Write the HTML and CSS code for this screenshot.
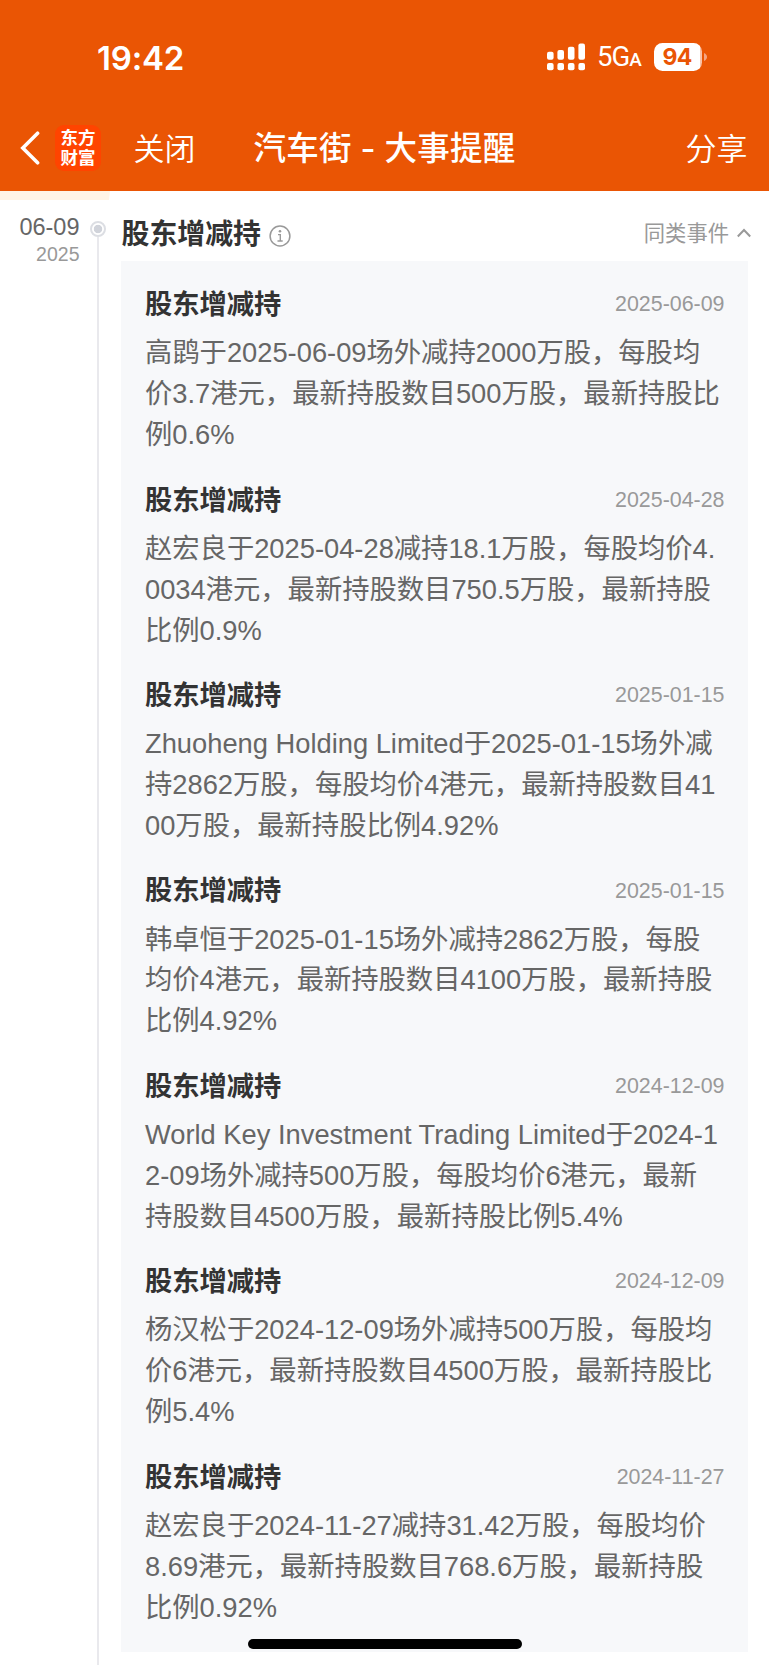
FILE: index.html
```html
<!DOCTYPE html>
<html lang="zh-CN">
<head>
<meta charset="utf-8">
<title>汽车街 - 大事提醒</title>
<link rel="stylesheet" href="styles.css">
</head>
<body>
<header class="header">
  <div class="status">
    <span class="time">19:42</span>
    <div class="indicators">
      <svg class="signal" width="38" height="28" viewBox="0 0 38 28" fill="#fff">
        <rect x="0" y="8.8" width="6.6" height="8" rx="2"/><rect x="10.4" y="7" width="6.6" height="9.8" rx="2"/><rect x="20.9" y="3.8" width="6.6" height="13" rx="2"/><rect x="31.4" y="0.5" width="6.6" height="16.3" rx="2"/>
        <rect x="0" y="20" width="6.6" height="7.2" rx="2"/><rect x="10.4" y="20" width="6.6" height="7.2" rx="2"/><rect x="20.9" y="20" width="6.6" height="7.2" rx="2"/><rect x="31.4" y="20" width="6.6" height="7.2" rx="2"/>
      </svg>
      <span class="network">5G<span class="network-sub">A</span></span>
      <div class="battery"><span class="level">94</span></div>
      <svg class="battery-tip" width="3" height="8" viewBox="0 0 3 8"><path d="M0 0C4 1.5 4 6.500 0 8Z" fill="#f5a583"/></svg>
    </div>
  </div>
  <nav class="nav">
    <svg class="back" width="20" height="34" viewBox="0 0 20 34" fill="none" stroke="#fff" stroke-width="3.6" stroke-linecap="round" stroke-linejoin="miter"><path d="M17.600 2.200L2.800 17L17.600 31.800"/></svg>
    <div class="logo">东方<br>财富</div>
    <span class="close">关闭</span>
    <h1 class="page-title">汽车街 - 大事提醒</h1>
    <span class="share">分享</span>
  </nav>
</header>
<main class="timeline">
  <aside class="rail">
    <svg class="tag" width="110" height="9" viewBox="0 0 110 9"><path d="M0 0H110L109 9H0Z" fill="#fff4e6"/></svg>
    <div class="rail-row">
      <div class="day"><div class="month-day">06-09</div><div class="year">2025</div></div>
      <div class="axis"><div class="dot"></div><div class="line"></div></div>
    </div>
  </aside>
  <section class="event">
    <div class="event-head">
      <h2 class="event-title">股东增减持</h2>
      <svg class="info" width="22" height="22" viewBox="0 0 22 22" fill="none" stroke="#999"><circle cx="11" cy="11" r="9.900" stroke-width="1.500"/><path d="M9 9.600H11.300V16M8.500 16H13.700" stroke-width="1.400"/><circle cx="11" cy="6.300" r="1.300" fill="#999" stroke="none"/></svg>
      <span class="similar">同类事件</span>
      <svg class="chevron" width="14" height="10" viewBox="0 0 14 10" fill="none" stroke="#999" stroke-width="2"><path d="M0.800 8.500L7 2L13.200 8.500"/></svg>
    </div>
    <div class="panel">
      <article class="item">
        <div class="item-head"><h3>股东增减持</h3><time>2025-06-09</time></div>
        <p>高鹍于2025-06-09场外减持2000万股，每股均<br>价3.7港元，最新持股数目500万股，最新持股比<br>例0.6%</p>
      </article>
      <article class="item">
        <div class="item-head"><h3>股东增减持</h3><time>2025-04-28</time></div>
        <p>赵宏良于2025-04-28减持18.1万股，每股均价4.<br>0034港元，最新持股数目750.5万股，最新持股<br>比例0.9%</p>
      </article>
      <article class="item">
        <div class="item-head"><h3>股东增减持</h3><time>2025-01-15</time></div>
        <p>Zhuoheng Holding Limited于2025-01-15场外减<br>持2862万股，每股均价4港元，最新持股数目41<br>00万股，最新持股比例4.92%</p>
      </article>
      <article class="item">
        <div class="item-head"><h3>股东增减持</h3><time>2025-01-15</time></div>
        <p>韩卓恒于2025-01-15场外减持2862万股，每股<br>均价4港元，最新持股数目4100万股，最新持股<br>比例4.92%</p>
      </article>
      <article class="item">
        <div class="item-head"><h3>股东增减持</h3><time>2024-12-09</time></div>
        <p>World Key Investment Trading Limited于2024-1<br>2-09场外减持500万股，每股均价6港元，最新<br>持股数目4500万股，最新持股比例5.4%</p>
      </article>
      <article class="item">
        <div class="item-head"><h3>股东增减持</h3><time>2024-12-09</time></div>
        <p>杨汉松于2024-12-09场外减持500万股，每股均<br>价6港元，最新持股数目4500万股，最新持股比<br>例5.4%</p>
      </article>
      <article class="item">
        <div class="item-head"><h3>股东增减持</h3><time>2024-11-27</time></div>
        <p>赵宏良于2024-11-27减持31.42万股，每股均价<br>8.69港元，最新持股数目768.6万股，最新持股<br>比例0.92%</p>
      </article>
    </div>
  </section>
</main>
<div class="home-indicator"></div>
</body>
</html>
```
FILE: styles.css
```css
* { box-sizing: border-box; margin: 0; padding: 0; }
body {
  width: 769px;
  height: 1665px;
  overflow: hidden;
  position: relative;
  background: #fff;
  font-family: "Liberation Sans", "Noto Sans CJK SC", sans-serif;
  color: #666;
}
svg { display: block; flex: none; }
.header { height: 191px; background: #ea5504; color: #fff; }
.status {
  height: 114px;
  padding: 0 62px 0 97px;
  display: flex;
  align-items: center;
  justify-content: space-between;
}
.time { font: 600 33px/40px Inter, sans-serif; letter-spacing: -0.2px; padding-top: 1px; }
.indicators { display: flex; align-items: center; }
.network { width: 69px; padding: 2px 0 0 12px; font: 400 27.500px/32px Roboto, sans-serif; letter-spacing: -1px; white-space: nowrap; }
.network-sub { font-size: 19px; font-weight: 500; }
.battery {
  width: 48px;
  height: 27.400px;
  border-radius: 8.500px;
  background: linear-gradient(90deg, #fff 46px, #f9c3a9 46px);
  display: flex;
  align-items: center;
  justify-content: center;
}
.level { font: 700 23px/27px Inter, sans-serif; color: #ea5504; letter-spacing: -0.8px; padding: 1px 2px 0 0; }
.battery-tip { margin-left: 2px; }
.nav { height: 68px; display: flex; align-items: center; padding: 0 21.500px 0 20px; white-space: nowrap; }
.logo {
  width: 46px;
  height: 46px;
  margin-left: 15px;
  padding-top: 2px;
  border-radius: 9px;
  background: #ff4400;
  text-align: center;
  font: 700 17.500px/19.700px "Noto Sans CJK SC", sans-serif;
}
.close, .share { font: 350 31px/46px "Noto Sans CJK SC", sans-serif; padding-bottom: 3px; }
.close { margin-left: 32.500px; }
.page-title {
  margin-left: 58px;
  padding-top: 2px;
  font: 500 32.500px/46px Inter, "Noto Sans CJK SC", sans-serif;
  letter-spacing: 0.2px;
}
.share { margin-left: auto; }
.timeline { height: 1474px; display: flex; }
.rail { width: 121px; display: flex; flex-direction: column; flex: none; }
.rail-row { flex: 1; display: flex; }
.day { width: 79.500px; padding-top: 13px; text-align: right; }
.month-day { font-size: 23.500px; line-height: 28px; }
.year { font-size: 19.500px; line-height: 26px; color: #999; }
.axis { width: 37px; padding-top: 21px; display: flex; flex-direction: column; align-items: center; }
.dot {
  width: 16px;
  height: 16px;
  flex: none;
  border: 2px solid #dcdee3;
  border-radius: 50%;
  background: radial-gradient(circle, #d0d3da 3.800px, #fff 4.600px);
}
.line { width: 2px; flex: 1; background: #e9e9ed; }
.event { width: 627px; flex: none; }
.event-head { height: 70px; padding-top: 13px; display: flex; align-items: center; margin-right: -3px; }
.event-title { margin-left: 0.500px; padding-bottom: 1px; font: 700 27.900px/40px "Noto Sans CJK SC", sans-serif; color: #333; }
.info { margin: 7px 0 0 8px; }
.similar { margin-left: auto; padding-top: 3px; font-size: 21.300px; line-height: 32px; color: #999; }
.chevron { margin: 1px 0 0 8px; }
.panel { height: 1390.700px; padding: 22.700px 23.500px 0 24px; background: #f7f8fa; }
.item { height: 195.430px; }
.item-head { height: 40.900px; margin-bottom: 8.700px; display: flex; align-items: center; justify-content: space-between; }
.item h3 { padding-bottom: 3px; font: 700 27.250px/40.900px "Noto Sans CJK SC", sans-serif; color: #333; }
.item time { font-size: 21.400px; line-height: 30px; color: #999; padding-top: 0.500px; }
.item p { font-size: 27.300px; line-height: 40.900px; white-space: nowrap; }
.home-indicator {
  position: absolute;
  left: 248px;
  top: 1639px;
  width: 273.500px;
  height: 10px;
  border-radius: 5px;
  background: #000;
}
```
